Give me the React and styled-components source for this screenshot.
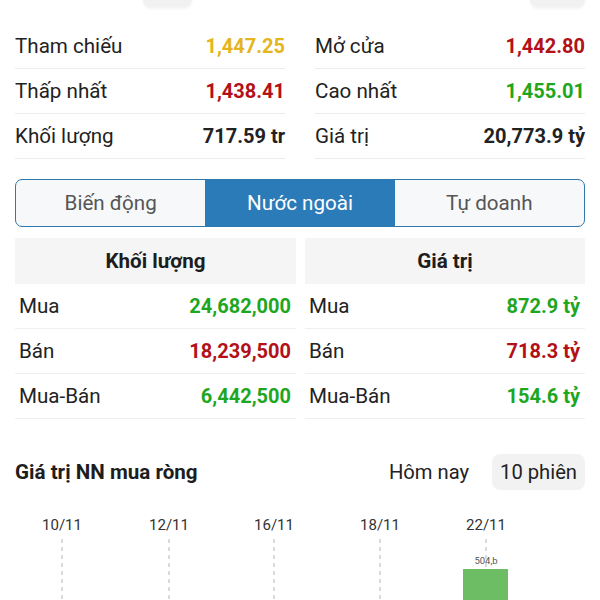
import React from "react";
import styled, { createGlobalStyle } from "styled-components";

const Global = createGlobalStyle`
  html, body { margin: 0; padding: 0; background: #fff; }
  body { font-family: Roboto, "Noto Sans", "Liberation Sans", sans-serif; color: #222; }
  * { box-sizing: border-box; }
`;

const FS = "20.6px";

const COLORS = {
  ref: "#e4b520",
  up: "#1fa61f",
  down: "#b21118",
  text: "#222",
};

const Page = styled.div`
  width: 600px;
  height: 600px;
  overflow: hidden;
  display: flex;
  flex-direction: column;
  & > * { flex-shrink: 0; }
`;

const TopBar = styled.div`
  margin-top: -30px;
  height: 37px;
  display: flex;
  align-items: stretch;
  padding: 0 15px 0 143px;
  justify-content: space-between;
`;

const GhostPill = styled.div`
  width: ${(p) => p.$w}px;
  background: #f1f1f1;
  border-radius: 8px;
  box-shadow: 0 2px 3px rgba(0, 0, 0, 0.05);
`;

const InfoGrid = styled.div`
  margin-top: 17px;
  padding: 0 15px;
  display: grid;
  grid-template-columns: 1fr 1fr;
  column-gap: 30px;
`;

const InfoRow = styled.div`
  height: 45px;
  display: flex;
  align-items: center;
  justify-content: space-between;
  border-bottom: 1px solid #ececec;
  font-size: ${FS};
`;

const Label = styled.span`
  color: ${COLORS.text};
`;

const Value = styled.span`
  font-size: 20px;
  font-weight: 700;
  color: ${(p) => p.$color || COLORS.text};
`;

const Tabs = styled.div`
  margin: 20px 15px 0;
  height: 48px;
  display: grid;
  grid-template-columns: 1fr 1fr 1fr;
  border: 1px solid #2d78ad;
  border-radius: 7px;
  overflow: hidden;
  background: #f7f8f9;
`;

const Tab = styled.div`
  display: flex;
  align-items: center;
  justify-content: center;
  font-size: ${FS};
  color: ${(p) => (p.$active ? "#fff" : "#555")};
  background: ${(p) => (p.$active ? "#2b7bb9" : "transparent")};
`;

const Tables = styled.div`
  margin: 11px 15px 0;
  display: grid;
  grid-template-columns: 281px 280px;
  column-gap: 9px;
`;

const Column = styled.div`
  display: flex;
  flex-direction: column;
`;

const HeadCell = styled.div`
  height: 46px;
  display: flex;
  align-items: center;
  justify-content: center;
  background: #f5f5f5;
  font-size: ${FS};
  font-weight: 700;
  color: #1d1d1d;
`;

const TRow = styled.div`
  height: 45px;
  display: flex;
  align-items: center;
  justify-content: space-between;
  padding: 0 5px 0 4px;
  border-bottom: 1px solid #efefef;
  font-size: ${FS};
`;

const ChartHeader = styled.div`
  margin: 35px 15px 0;
  display: flex;
  align-items: center;
  height: 36px;
`;

const ChartTitle = styled.div`
  font-size: ${FS};
  font-weight: 700;
  color: #1d1d1d;
  flex: 1;
`;

const Seg = styled.div`
  height: 36px;
  padding: 0 8px;
  display: flex;
  align-items: center;
  font-size: 20.2px;
  color: #222;
  border-radius: 8px;
  background: ${(p) => (p.$active ? "#f2f2f2" : "transparent")};
  margin-left: ${(p) => (p.$active ? "15px" : "0")};
`;

const ChartSvg = styled.svg`
  display: block;
  margin-top: 10px;
`;

const info = [
  [
    { l: "Tham chiếu", v: "1,447.25", c: COLORS.ref },
    { l: "Thấp nhất", v: "1,438.41", c: COLORS.down },
    { l: "Khối lượng", v: "717.59 tr" },
  ],
  [
    { l: "Mở cửa", v: "1,442.80", c: COLORS.down },
    { l: "Cao nhất", v: "1,455.01", c: COLORS.up },
    { l: "Giá trị", v: "20,773.9 tỷ" },
  ],
];

const tables = [
  {
    h: "Khối lượng",
    rows: [
      { l: "Mua", v: "24,682,000", c: COLORS.up },
      { l: "Bán", v: "18,239,500", c: COLORS.down },
      { l: "Mua-Bán", v: "6,442,500", c: COLORS.up },
    ],
  },
  {
    h: "Giá trị",
    rows: [
      { l: "Mua", v: "872.9 tỷ", c: COLORS.up },
      { l: "Bán", v: "718.3 tỷ", c: COLORS.down },
      { l: "Mua-Bán", v: "154.6 tỷ", c: COLORS.up },
    ],
  },
];

const dates = [
  { d: "10/11", x: 62 },
  { d: "12/11", x: 169 },
  { d: "16/11", x: 274 },
  { d: "18/11", x: 380 },
  { d: "22/11", x: 486 },
];

function Chart() {
  return (
    <ChartSvg width="600" height="110" viewBox="0 0 600 110">
      {dates.map((it) => (
        <g key={it.d}>
          <text
            x={it.x}
            y="30"
            textAnchor="middle"
            fontSize="15"
            fill="#333"
            fontFamily="Roboto, sans-serif"
          >
            {it.d}
          </text>
          <line
            x1={it.x}
            x2={it.x}
            y1="39"
            y2="110"
            stroke="#b5b5b5"
            strokeWidth="1"
            strokeDasharray="4 4"
          />
        </g>
      ))}
      <rect x="463" y="69" width="45" height="50" fill="#6cbd63" />
      <text
        x="486"
        y="64"
        textAnchor="middle"
        fontSize="9.5"
        fill="#555"
        fontFamily="Roboto, sans-serif"
      >
        504,b
      </text>
    </ChartSvg>
  );
}

export default function App() {
  return (
    <Page>
      <Global />
      <TopBar>
        <GhostPill $w={49} />
        <GhostPill $w={55} />
      </TopBar>
      <InfoGrid>
        {info.map((col, ci) => (
          <Column key={ci}>
            {col.map((r) => (
              <InfoRow key={r.l}>
                <Label>{r.l}</Label>
                <Value $color={r.c}>{r.v}</Value>
              </InfoRow>
            ))}
          </Column>
        ))}
      </InfoGrid>
      <Tabs>
        <Tab>Biến động</Tab>
        <Tab $active>Nước ngoài</Tab>
        <Tab>Tự doanh</Tab>
      </Tabs>
      <Tables>
        {tables.map((t) => (
          <Column key={t.h}>
            <HeadCell>{t.h}</HeadCell>
            {t.rows.map((r) => (
              <TRow key={r.l}>
                <Label>{r.l}</Label>
                <Value $color={r.c}>{r.v}</Value>
              </TRow>
            ))}
          </Column>
        ))}
      </Tables>
      <ChartHeader>
        <ChartTitle>Giá trị NN mua ròng</ChartTitle>
        <Seg>Hôm nay</Seg>
        <Seg $active>10 phiên</Seg>
      </ChartHeader>
      <Chart />
    </Page>
  );
}
